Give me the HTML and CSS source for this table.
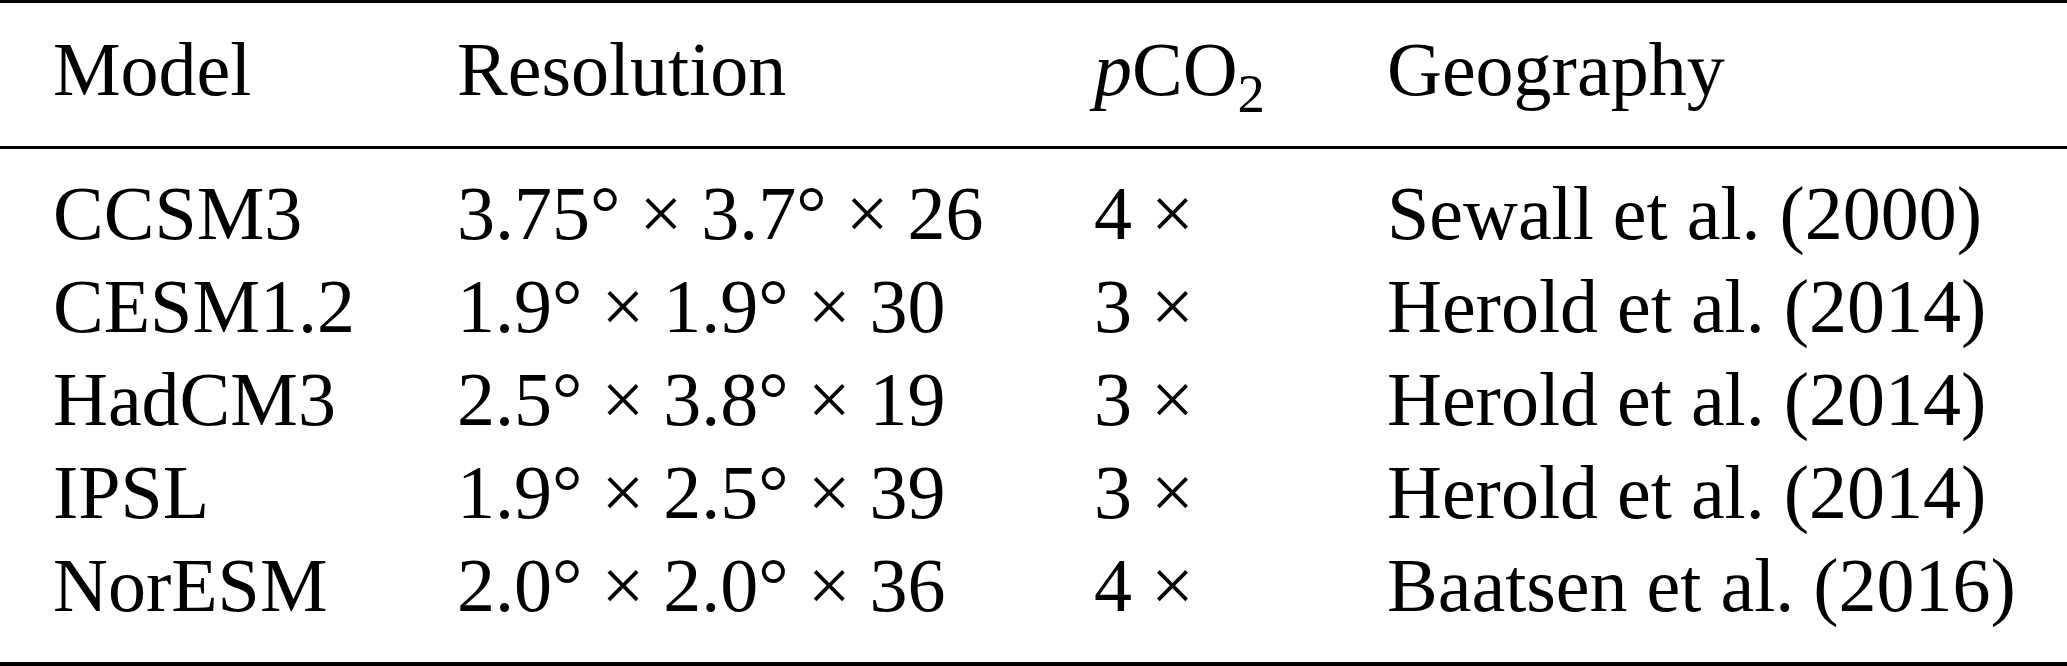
FILE: index.html
```html
<!DOCTYPE html>
<html lang="en">
<head>
    <meta charset="UTF-8">
    <title>Model configurations</title>
    <link rel="stylesheet" href="styles.css">
</head>
<body>
    <table class="model-table">
        <colgroup>
            <col class="col-model">
            <col class="col-res">
            <col class="col-co2">
            <col class="col-geo">
        </colgroup>
        <thead>
            <tr>
                <th>Model</th>
                <th>Resolution</th>
                <th><i>p</i>CO<sub>2</sub></th>
                <th>Geography</th>
            </tr>
        </thead>
        <tbody>
            <tr>
                <td>CCSM3</td>
                <td>3.75° × 3.7° × 26</td>
                <td>4 ×</td>
                <td>Sewall et al. (2000)</td>
            </tr>
            <tr>
                <td>CESM1.2</td>
                <td>1.9° × 1.9° × 30</td>
                <td>3 ×</td>
                <td>Herold et al. (2014)</td>
            </tr>
            <tr>
                <td>HadCM3</td>
                <td>2.5° × 3.8° × 19</td>
                <td>3 ×</td>
                <td>Herold et al. (2014)</td>
            </tr>
            <tr>
                <td>IPSL</td>
                <td>1.9° × 2.5° × 39</td>
                <td>3 ×</td>
                <td>Herold et al. (2014)</td>
            </tr>
            <tr>
                <td>NorESM</td>
                <td>2.0° × 2.0° × 36</td>
                <td>4 ×</td>
                <td>Baatsen et al. (2016)</td>
            </tr>
        </tbody>
    </table>
</body>
</html>
```

FILE: styles.css
```css
body {
    margin: 0;
    background: #ffffff;
    color: #000000;
    font-family: 'Liberation Serif', 'Times New Roman', serif;
}

.model-table {
    width: 100%;
    table-layout: fixed;
    border-spacing: 0;
    border-top: 3px solid #000;
    border-bottom: 4px solid #000;
    font-size: 76px;
    line-height: 93px;
}

.col-model { width: 457px; }
.col-res { width: 637px; }
.col-co2 { width: 293px; }

th, td {
    padding: 0;
    text-align: left;
    font-weight: normal;
    white-space: nowrap;
}

th:first-child, td:first-child {
    padding-left: 53px;
}

thead th {
    padding-top: 20px;
    padding-bottom: 30px;
    border-bottom: 3px solid #000;
}

tbody tr:first-child td {
    padding-top: 18px;
}

tbody tr:last-child td {
    padding-bottom: 30px;
}

sub {
    font-size: 0.72em;
    line-height: 0;
    vertical-align: -17px;
}
```
